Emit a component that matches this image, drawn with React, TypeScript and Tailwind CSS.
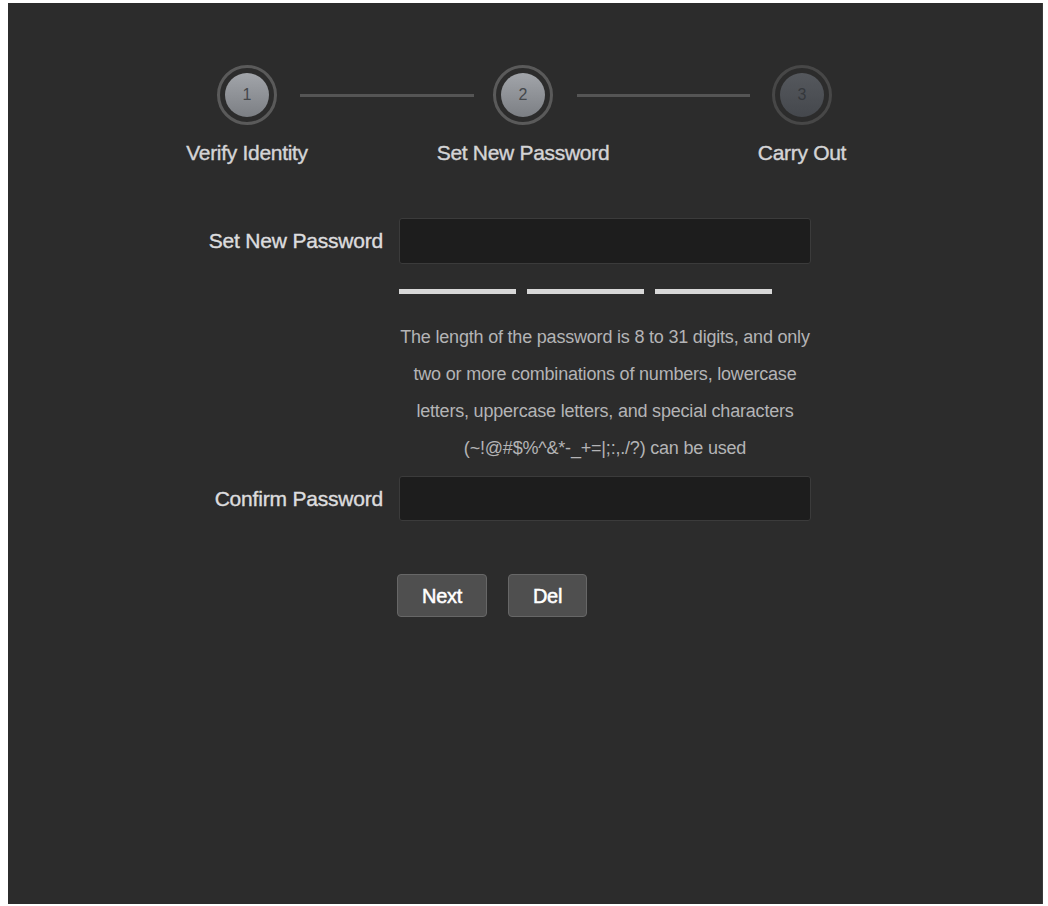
import React from "react";

function Step({ n, label, active }: { n: number; label: string; active: boolean }) {
  return (
    <div className="flex w-[60px] flex-col items-center">
      <div
        className={
          "flex h-[60px] w-[60px] items-center justify-center rounded-full border-[3px] " +
          (active ? "border-[#5a5a5a]" : "border-[#474747]")
        }
      >
        <div
          className={
            "flex h-[44px] w-[44px] items-center justify-center rounded-full text-[16px] " +
            (active
              ? "bg-gradient-to-b from-[#a2a5aa] to-[#7c7f84] text-[#44474b]"
              : "bg-gradient-to-b from-[#55585d] to-[#45484d] text-[#35383c]")
          }
        >
          {n}
        </div>
      </div>
      <div className="mt-[17px] whitespace-nowrap text-[21px] leading-[22px] tracking-[-0.3px] text-[#d4d4d6] [-webkit-text-stroke:0.4px_#d4d4d6]">
        {label}
      </div>
    </div>
  );
}

export default function App() {
  return (
    <div
      className="min-h-[906px] bg-white pb-[2px] pl-[8px] pr-[5px] pt-[3px]"
      style={{ fontFamily: '"Liberation Sans", Arial, sans-serif' }}
    >
      <div className="h-[901px] border-r border-[#3a3a3a] bg-[#2c2c2c]">
        {/* stepper */}
        <div className="ml-[209px] flex items-start pt-[62px]">
          <Step n={1} label="Verify Identity" active />
          <div className="ml-[23px] mr-[19px] mt-[29px] h-[3px] w-[174px] bg-[#555555]" />
          <Step n={2} label="Set New Password" active />
          <div className="ml-[24px] mr-[22px] mt-[29px] h-[3px] w-[173px] bg-[#555555]" />
          <Step n={3} label="Carry Out" active={false} />
        </div>

        {/* form */}
        <div className="mt-[54px] flex flex-col">
          <div className="flex items-center">
            <div className="w-[391px] pr-[16px] text-right text-[21px] leading-[22px] tracking-[-0.2px] text-[#dcdcde] [-webkit-text-stroke:0.4px_#dcdcde]">
              Set New Password
            </div>
            <div className="h-[46px] w-[412px] rounded-[3px] border border-[#3b3b3b] bg-[#1d1d1d]" />
          </div>

          <div className="ml-[391px] mt-[25px] flex gap-[11px]">
            <div className="h-[5px] w-[117px] bg-[#d8d8d8]" />
            <div className="h-[5px] w-[117px] bg-[#d8d8d8]" />
            <div className="h-[5px] w-[117px] bg-[#d8d8d8]" />
          </div>

          <div className="ml-[391px] mt-[25px] w-[412px] whitespace-nowrap text-center text-[18px] leading-[37px] tracking-[-0.2px] text-[#b4b4b6]">
            The length of the password is 8 to 31 digits, and only
            <br />
            two or more combinations of numbers, lowercase
            <br />
            letters, uppercase letters, and special characters
            <br />
            (~!@#$%^&amp;*-_+=|;:,./?) can be used
          </div>

          <div className="mt-[9px] flex items-center">
            <div className="w-[391px] pr-[16px] text-right text-[21px] leading-[22px] tracking-[-0.2px] text-[#dcdcde] [-webkit-text-stroke:0.4px_#dcdcde]">
              Confirm Password
            </div>
            <div className="h-[45px] w-[412px] rounded-[3px] border border-[#3b3b3b] bg-[#1d1d1d]" />
          </div>

          <div className="ml-[389px] mt-[53px] flex gap-[21px]">
            <button className="h-[43px] w-[90px] rounded-[4px] border border-[#676767] bg-[#4f4f4f] text-[20px] tracking-[-0.3px] text-white [-webkit-text-stroke:0.5px_#ffffff]">
              Next
            </button>
            <button className="h-[43px] w-[79px] rounded-[4px] border border-[#676767] bg-[#4f4f4f] text-[20px] tracking-[-0.3px] text-white [-webkit-text-stroke:0.5px_#ffffff]">
              Del
            </button>
          </div>
        </div>
      </div>
    </div>
  );
}
